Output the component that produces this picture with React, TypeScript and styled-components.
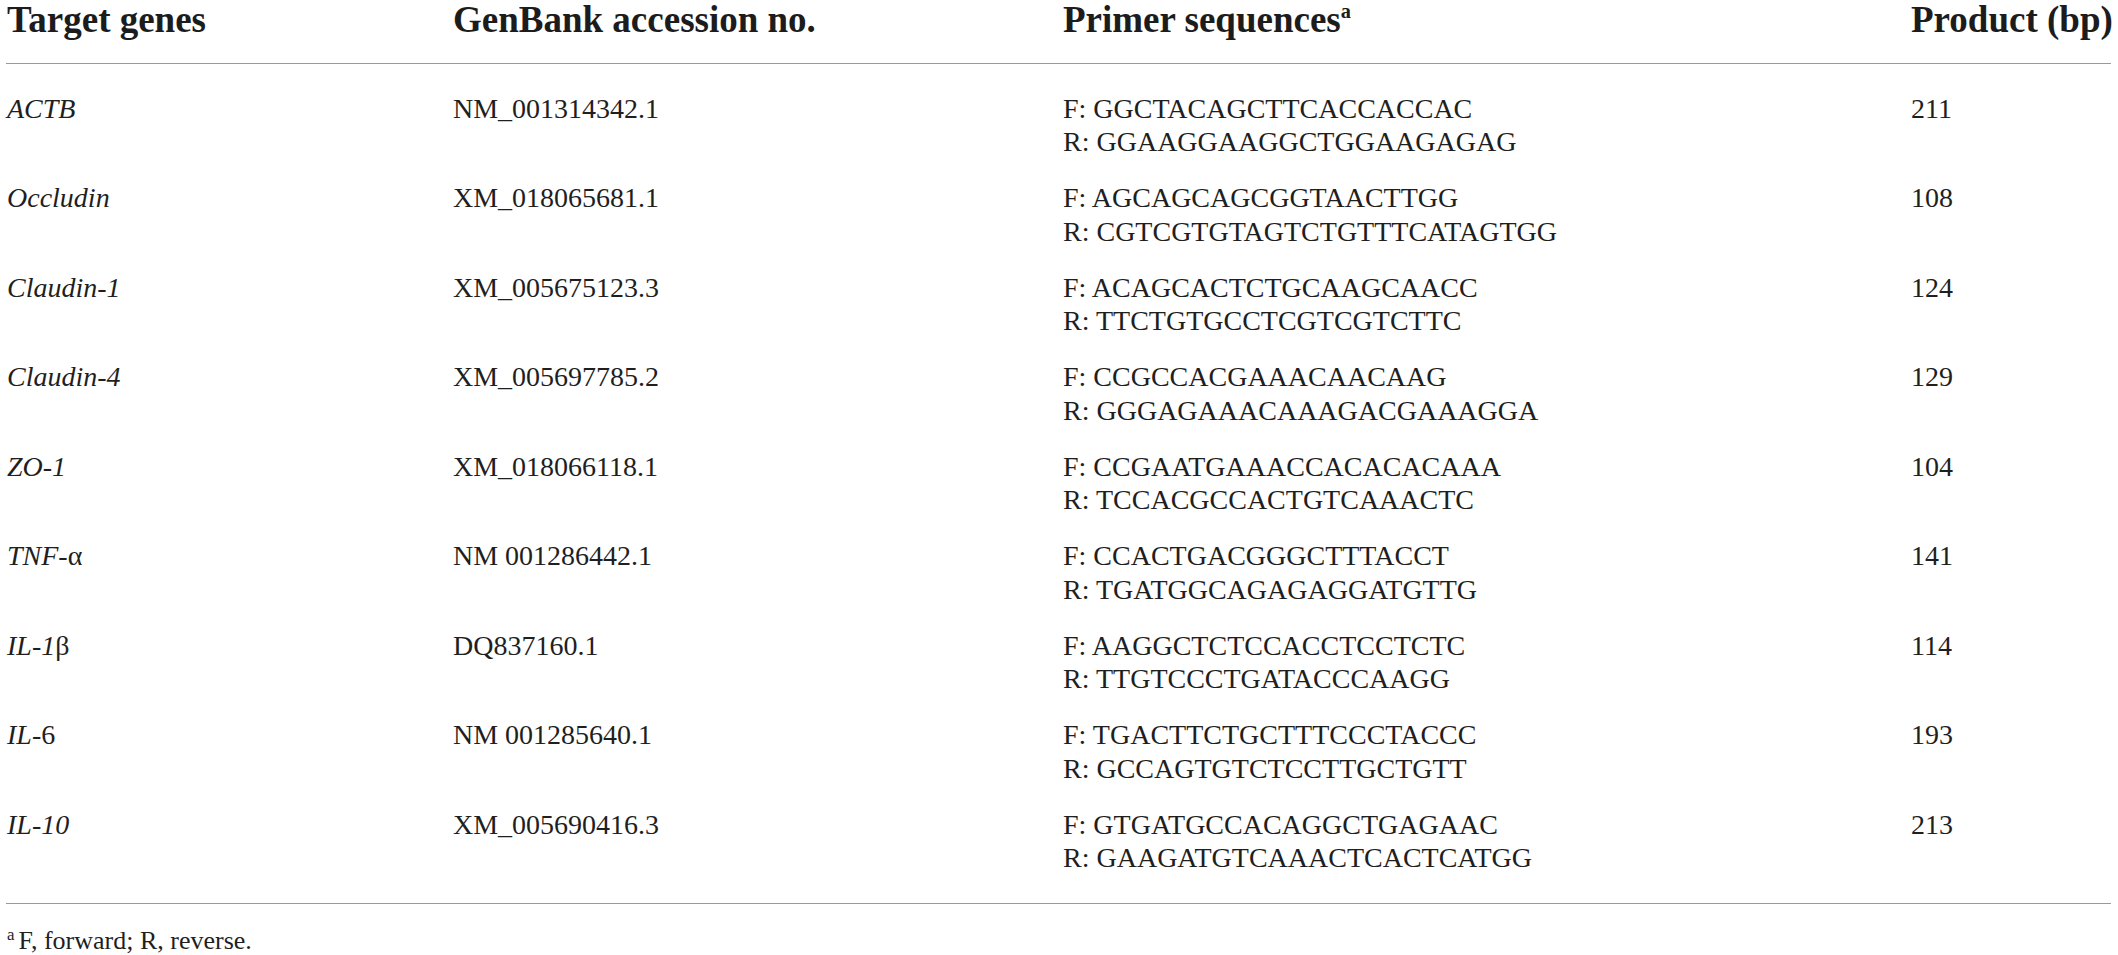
import React from "react";
import styled, { createGlobalStyle } from "styled-components";

const Global = createGlobalStyle`
  html, body { margin: 0; padding: 0; background: #ffffff; }
  body { font-family: "Liberation Serif", "Times New Roman", serif; color: #1f1f1f; }
`;

const Page = styled.div`
  padding: 0 7px 0 6px;
  width: 2118px;
  box-sizing: border-box;
`;

const Grid = styled.div`
  display: grid;
  grid-template-columns: 446px 610px 848px 1fr;
`;

const HeaderRow = styled(Grid)`
  font-size: 37px;
  font-weight: 700;
  line-height: 40px;
  padding: 0 0 23px 1px;
  border-bottom: 1px solid #9a9a9a;
  color: #1c1c1c;
`;

const Sup = styled.sup`
  font-size: 0.55em;
  line-height: 0;
  vertical-align: 0.7em;
`;

const Body = styled.div`
  padding: 16.5px 0 17px 1px;
  border-bottom: 1px solid #9a9a9a;
`;

const Row = styled(Grid)`
  font-size: 28px;
  line-height: 33.5px;
  padding: 11.25px 0;
`;

const Cell = styled.div<{ $italic?: boolean }>`
  font-style: ${(p) => (p.$italic ? "italic" : "normal")};
  white-space: nowrap;
`;

const Up = styled.span`
  font-style: normal;
`;

const Foot = styled.div`
  font-size: 26px;
  line-height: 29px;
  margin-top: 22px;
  padding-left: 1px;
  color: #1f1f1f;
`;

const FootSup = styled.sup`
  font-size: 0.65em;
  line-height: 0;
  vertical-align: 0.55em;
  margin-right: 4px;
`;

type Entry = {
  gene: React.ReactNode;
  acc: string;
  f: string;
  r: string;
  bp: string;
};

const rows: Entry[] = [
  { gene: "ACTB", acc: "NM_001314342.1", f: "GGCTACAGCTTCACCACCAC", r: "GGAAGGAAGGCTGGAAGAGAG", bp: "211" },
  { gene: "Occludin", acc: "XM_018065681.1", f: "AGCAGCAGCGGTAACTTGG", r: "CGTCGTGTAGTCTGTTTCATAGTGG", bp: "108" },
  { gene: "Claudin-1", acc: "XM_005675123.3", f: "ACAGCACTCTGCAAGCAACC", r: "TTCTGTGCCTCGTCGTCTTC", bp: "124" },
  { gene: "Claudin-4", acc: "XM_005697785.2", f: "CCGCCACGAAACAACAAG", r: "GGGAGAAACAAAGACGAAAGGA", bp: "129" },
  { gene: "ZO-1", acc: "XM_018066118.1", f: "CCGAATGAAACCACACACAAA", r: "TCCACGCCACTGTCAAACTC", bp: "104" },
  { gene: <>TNF<Up>-α</Up></>, acc: "NM 001286442.1", f: "CCACTGACGGGCTTTACCT", r: "TGATGGCAGAGAGGATGTTG", bp: "141" },
  { gene: <>IL-1<Up>β</Up></>, acc: "DQ837160.1", f: "AAGGCTCTCCACCTCCTCTC", r: "TTGTCCCTGATACCCAAGG", bp: "114" },
  { gene: <>IL<Up>-6</Up></>, acc: "NM 001285640.1", f: "TGACTTCTGCTTTCCCTACCC", r: "GCCAGTGTCTCCTTGCTGTT", bp: "193" },
  { gene: "IL-10", acc: "XM_005690416.3", f: "GTGATGCCACAGGCTGAGAAC", r: "GAAGATGTCAAACTCACTCATGG", bp: "213" },
];

export default function App() {
  return (
    <Page>
      <Global />
      <HeaderRow>
        <Cell>Target genes</Cell>
        <Cell>GenBank accession no.</Cell>
        <Cell>
          Primer sequences<Sup>a</Sup>
        </Cell>
        <Cell>Product (bp)</Cell>
      </HeaderRow>
      <Body>
        {rows.map((r, i) => (
          <Row key={i}>
            <Cell $italic>{r.gene}</Cell>
            <Cell>{r.acc}</Cell>
            <Cell>
              <div>F: {r.f}</div>
              <div>R: {r.r}</div>
            </Cell>
            <Cell>{r.bp}</Cell>
          </Row>
        ))}
      </Body>
      <Foot>
        <FootSup>a</FootSup>F, forward; R, reverse.
      </Foot>
    </Page>
  );
}
